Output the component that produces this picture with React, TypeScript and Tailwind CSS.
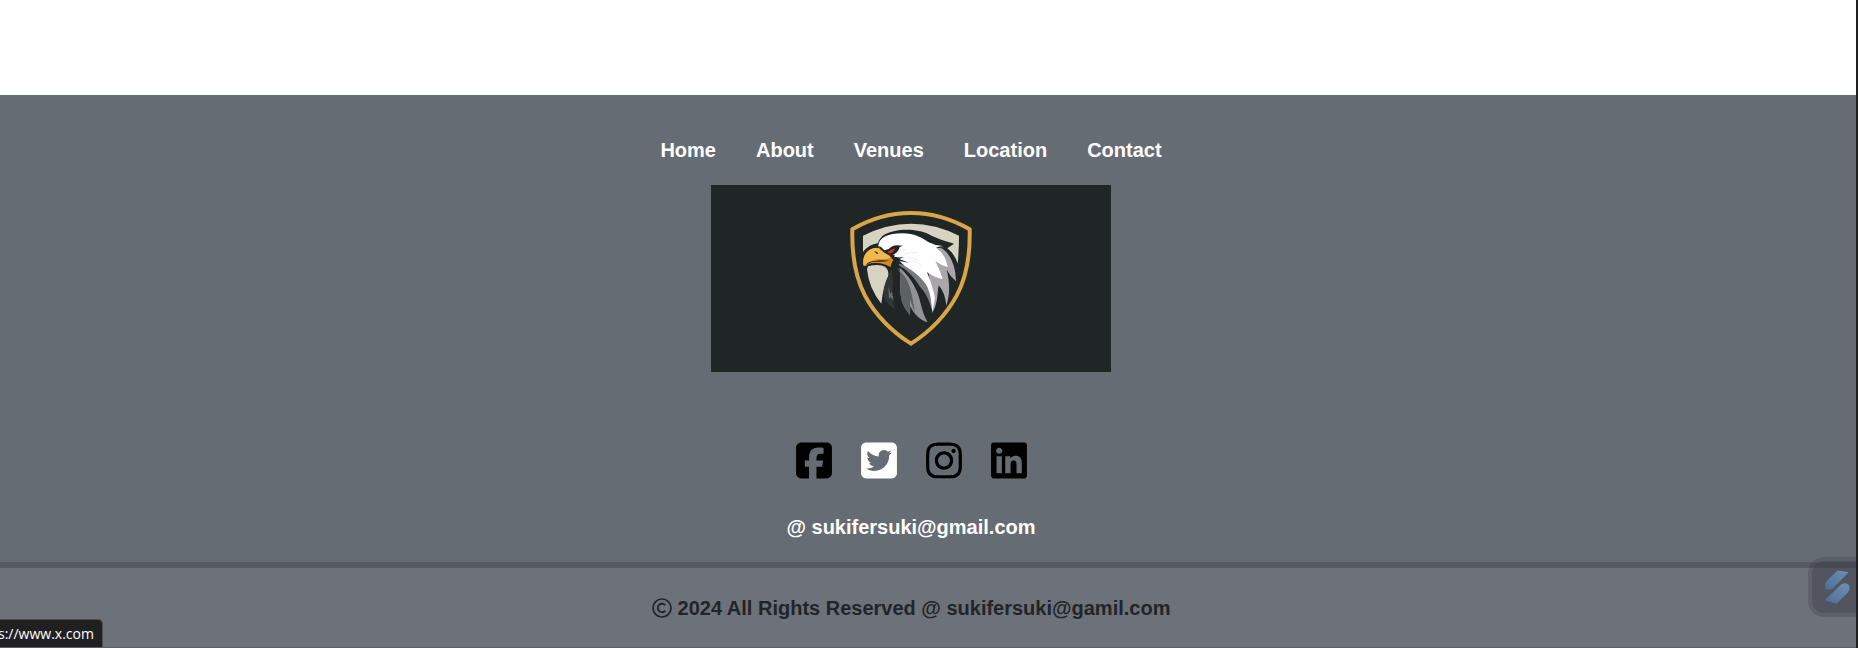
import { FaInstagram, FaLinkedin, FaSquareTwitter } from "react-icons/fa6";

const links = ["Home", "About", "Venues", "Location", "Contact"];

function FacebookIcon() {
  return (
    <svg viewBox="0 0 448 512" className="h-[41px] w-9" fill="currentColor" aria-hidden="true">
      <path d="M64 32C28.7 32 0 60.7 0 96V416c0 35.3 28.7 64 64 64h98.2V334.2H109.4V256h52.8V222.3c0-87.1 39.4-127.5 125-127.5c16.2 0 44.2 3.2 55.7 6.4V172c-6-.6-16.5-1-29.6-1c-42 0-58.2 15.9-58.2 57.2V256h83.6l-14.4 78.2H255V480H384c35.3 0 64-28.7 64-64V96c0-35.3-28.7-64-64-64H64z" />
    </svg>
  );
}

function CopyrightIcon() {
  return (
    <svg viewBox="0 0 20 20" className="size-5" fill="none" stroke="currentColor" role="img" aria-label="Copyright">
      <circle cx="10" cy="10" r="9" strokeWidth="1.7" />
      <path d="M13.3 7.1A4.3 4.3 0 1 0 13.3 12.9" strokeWidth="1.9" />
    </svg>
  );
}

function EagleBanner() {
  return (
    <svg viewBox="33 30 1200 561" className="h-[187px] w-[400px] max-w-full bg-[#202525]" role="img" aria-label="Eagle shield">
      <g transform="translate(390 60)">
        <path d="M67 103Q150 54 243 54Q335 54 419 103C421 185 410 246 380 302C346 364 298 411 243 446C188 411 139 364 105 302C76 246 65 185 67 103Z" fill="none" stroke="#d8a548" strokeWidth="12" />
        <path d="M99 122Q170 86 243 86Q316 86 387 122Q387 165 383 206Q375 178 352 160L372 146C340 137 322 131 295 117C262 100 195 98 158 122Q148 131 143 145Q116 149 99 171Z" fill="#d7d3c3" />
        <path d="M114 214Q147 206 165 215Q177 225 175 242Q160 270 154 326Q116 279 111 222Z" fill="#d7d3c3" />
        <path d="M186 221C172 247 160 278 160 304Q172 330 195 343Q185 317 188 280Q189 250 186 221Z" fill="#313637" />
        <path d="M175 274L181 296L186 290L191 318L182 306L177 312Z" fill="#6a6e6f" />
        <path d="M207 216C216 238 208 265 212 300C215 326 226 344 240 360L241 334C250 354 268 376 293 382C270 342 274 310 254 276Q239 244 207 216Z" fill="#929396" />
        <path d="M192 210C207 222 216 240 212 266Q210 285 212 300C215 326 226 344 240 360L240 314L254 352Q251 318 239 275Q229 242 192 210Z" fill="#5c6162" />
        <path d="M196 206C238 224 254 252 270 275C288 295 298 316 306 346L318 282L270 211Z" fill="#797b7e" />
        <path d="M283 140Q331 151 349 171Q377 202 378 259Q359 242 350 224C359 258 361 300 349 332Q345 292 326 271C321 304 323 326 307 354L298 250Z" fill="#aaa7aa" />
        <path d="M145 152C147 127 176 115 216 115C254 115 274 127 296 142Q312 151 334 152L344 156Q330 159 318 158Q347 178 353 216Q334 212 316 199Q330 225 338 252Q317 249 291 232Q305 265 315 308L307 350C304 315 300 281 282 260C260 232 232 216 200 200L191 193L194 179L164 173L150 161Z" fill="#fff" />
        <path d="M318 158Q326 161 349 156L340 153Q329 153 318 158Z" fill="#202525" />
        <path d="M100 213C97 188 105 170 124 162Q141 155 150 161Q164 173 184 184L194 193Q188 198 188 204L181 216Q161 204 139 204Q111 203 109 213Z" fill="#d28a25" />
        <path d="M100 208C98 186 107 170 124 162Q141 155 151 163Q162 174 176 182Q184 187 176 190Q166 194 148 192Q122 193 105 211Z" fill="#f4b94c" />
        <path d="M133 168L142 172L145 178L138 175Z" fill="#202525" />
        <path d="M112 204Q137 193 178 197Q158 201 140 200Q119 199 108 211Z" fill="#202525" />
        <path d="M148 153L154 157L163 166L176 162Q186 152 201 151L219 152L209 156Q206 170 193 177Q181 182 172 178Q160 173 148 160Z" fill="#202525" />
        <path d="M173 172Q180 164 194 160Q194 169 184 174Q178 176 173 172Z" fill="#d92a2e" />
        <path d="M178 181Q200 190 222 186L208 192L236 203L208 198L224 212L204 204L214 222L196 209L198 226L188 214L180 236L184 206L190 195Z" fill="#202525" />
        <path d="M220 179Q244 170 265 173M232 189Q255 187 268 199M244 196Q261 198 274 212M204 171Q215 163 229 163" fill="none" stroke="#e6e6e6" strokeWidth="2" />
      </g>
    </svg>
  );
}

export default function App() {
  return (
    <div className="flex min-h-screen flex-col border-r-2 border-[#202020] bg-white font-['Liberation_Sans',Arial,sans-serif] text-xl font-bold">
      <footer className="mt-[95px] flex flex-1 flex-col bg-[#666c74]">
        <div className="flex flex-col items-center pt-10 pr-[34px] text-white">
          <nav className="flex h-[30px] items-center gap-10" aria-label="Footer">
            {links.map((link) => (
              <a key={link} href={"#" + link.toLowerCase()}>{link}</a>
            ))}
          </nav>
          <div className="mt-5">
            <EagleBanner />
          </div>
          <div className="mt-[68px] flex gap-[29px]">
            <a href="https://www.facebook.com" aria-label="Facebook" className="text-black"><FacebookIcon /></a>
            <a href="https://www.x.com" aria-label="Twitter"><FaSquareTwitter className="h-[41px] w-9" /></a>
            <a href="https://www.instagram.com" aria-label="Instagram" className="text-black"><FaInstagram className="h-[41px] w-9" /></a>
            <a href="https://www.linkedin.com" aria-label="LinkedIn" className="text-black"><FaLinkedin className="h-[41px] w-9" /></a>
          </div>
          <p className="mt-[31px] mb-5 leading-[30px]">@ sukifersuki@gmail.com</p>
        </div>
        <div className="flex flex-1 items-start justify-center border-t-6 border-b border-t-[#565a63] border-b-[#5a5e66] bg-[#6d7179] pt-[25px] pr-[34px] text-[#212529]">
          <p className="flex items-center gap-[6px] leading-[30px]">
            <CopyrightIcon />
            2024 All Rights Reserved @ sukifersuki@gamil.com
          </p>
        </div>
      </footer>
      <div className="fixed bottom-px left-0 overflow-hidden rounded-tr-[5px] border-t border-r border-[#4b4e53] bg-[#202020] pr-2 font-['Open_Sans','Noto_Sans',sans-serif] text-sm leading-[27px] font-normal text-white">
        <span className="-ml-0.5">s://www.x.com</span>
      </div>
      <button aria-label="Open extension" className="fixed right-0.5 bottom-[31px] flex h-[60px] w-12 items-center rounded-l-2xl border-4 border-r-0 border-[#34374340] bg-[#3437437a] bg-clip-padding pl-3">
        <svg viewBox="0 0 76 102" className="h-[34px] w-[26px]" aria-hidden="true">
          <defs>
            <linearGradient id="bolt" x1="0" y1="1" x2="1" y2="0">
              <stop offset="0" stopColor="#4c6d9c" />
              <stop offset="1" stopColor="#6f8fb0" />
            </linearGradient>
          </defs>
          <path d="M40 1L73 7L27 54Q20 61 11 59Q3 58 2 50Q1 40 8 32Z" fill="url(#bolt)" />
          <path d="M1 91L49 44Q56 38 65 40Q75 43 76 54Q76 62 70 68L36 101Z" fill="url(#bolt)" />
        </svg>
      </button>
    </div>
  );
}
